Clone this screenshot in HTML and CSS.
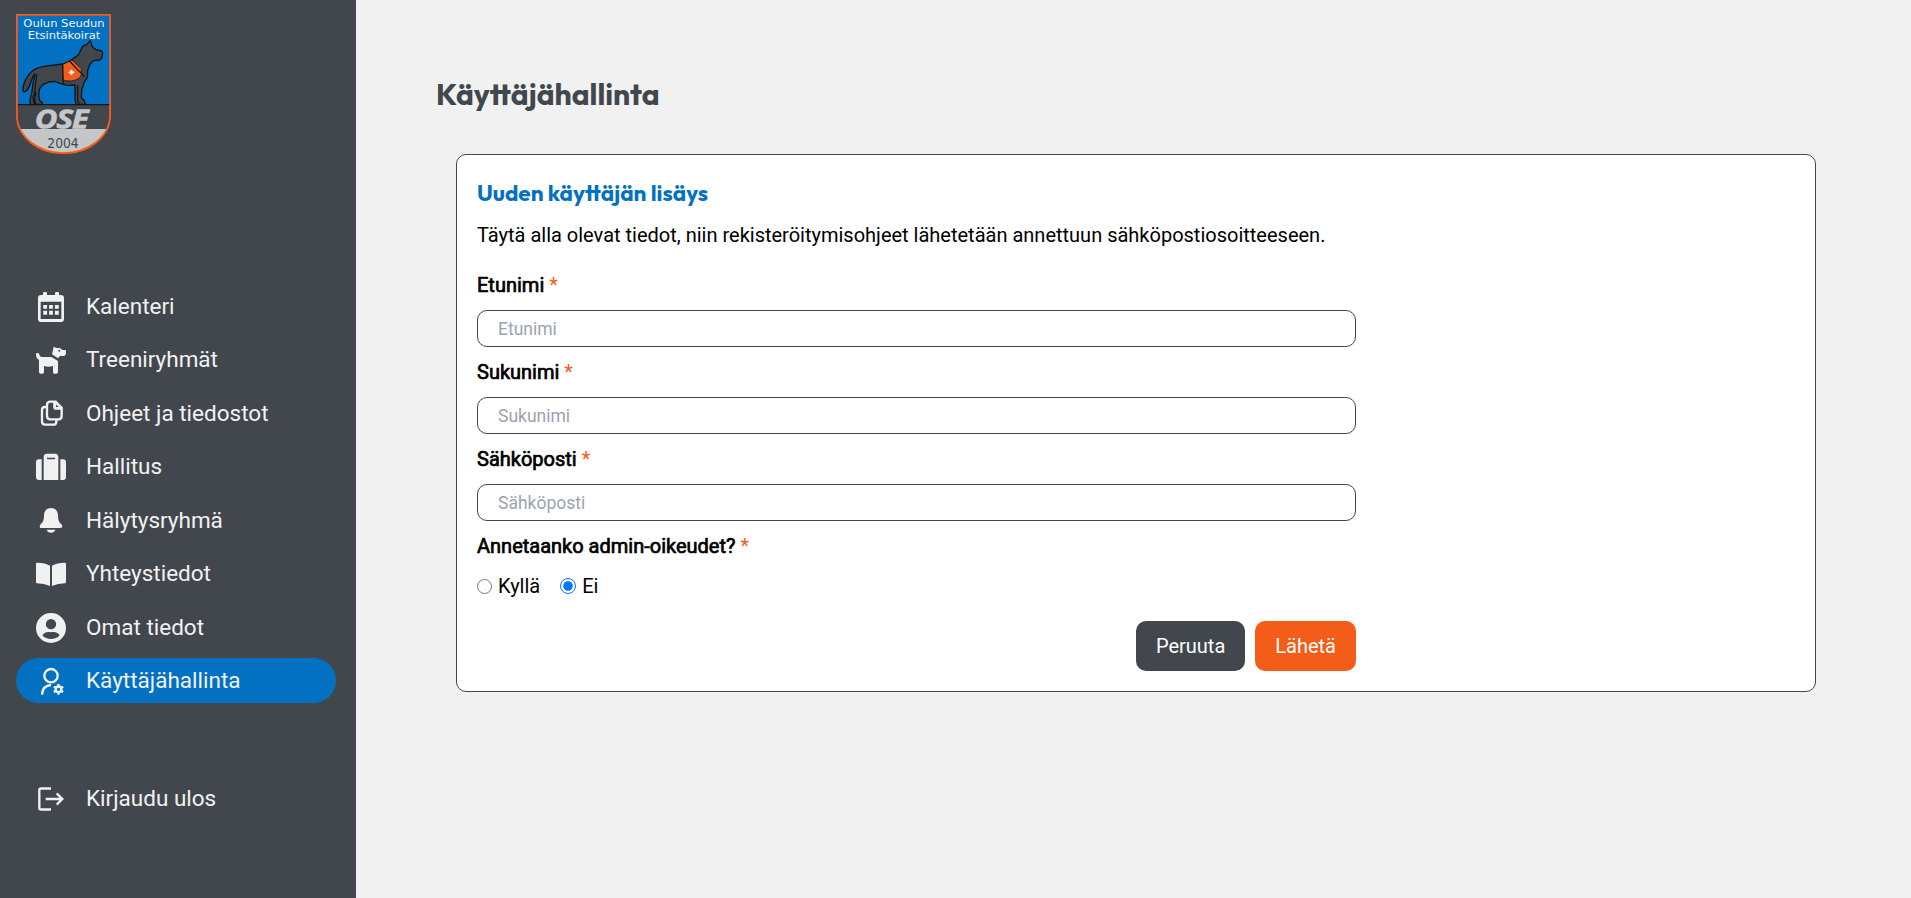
FILE: index.html
```html
<!DOCTYPE html>
<html lang="fi">
<head>
<meta charset="utf-8">
<title>Käyttäjähallinta</title>
<link rel="stylesheet" href="styles.css">
</head>
<body>
<div class="app">
  <aside class="sidebar">
    <svg class="logo" viewBox="48 42 285 420">
      <clipPath id="shield"><path d="M51 45H330V345C330 415 260 459 190 459C120 459 51 415 51 345Z"/></clipPath>
      <g clip-path="url(#shield)">
        <rect class="blue" x="48" y="42" width="285" height="272"/>
        <rect class="slate" x="48" y="313" width="285" height="75"/>
        <rect class="silver" x="48" y="387" width="285" height="80"/>
        <path class="ink" d="M48 314H333"/>
      </g>
      <path class="dog" d="M271 121L277 140L288 149L305 153L308 160L305 174L299 180L280 182L270 193L263 211L262 233L253 246L245 269L244 294L252 300L256 313H228L225 299V255L202 256L182 251L164 244L146 246L129 254L119 266L116 281L118 301L126 306V313H108L104 299L107 278L99 290L101 304L105 313H91L90 299L96 274L99 250L105 222C95 230 94 248 86 263C80 275 70 280 69 270C68 255 78 235 89 221C100 207 115 202 132 199L189 192L211 182L235 165L248 139L260 134Z"/>
      <path class="ink" d="M233 256V303L239 312M111 222C109 240 104 258 104 280"/>
      <path class="vest" d="M188 193L210 183L245 221C243 233 230 241 214 243L188 242Z"/>
      <path class="vest" d="M208 183L216 180L245 207L242 218Z"/>
      <path class="ink" d="M188 192L190 254M208 183L253 230"/>
      <path class="cross" d="M214.500 209V225M206.500 217H222.500"/>
      <text class="logo-name" x="192" y="80" textLength="244" lengthAdjust="spacingAndGlyphs">Oulun Seudun</text>
      <text class="logo-name" x="192" y="117" textLength="218" lengthAdjust="spacingAndGlyphs">Etsintäkoirat</text>
      <text class="logo-ose" x="185" y="385" textLength="158" lengthAdjust="spacingAndGlyphs">OSE</text>
      <text class="logo-year" x="189" y="444" textLength="94" lengthAdjust="spacingAndGlyphs">2004</text>
      <path class="rim" d="M50.500 44.500H330.500V345C330.500 415 260 459.500 190 459.500C120 459.500 50.500 415 50.500 345Z"/>
    </svg>
    <nav class="nav">
      <a class="item"><svg class="icon" viewBox="108 36 90 90"><path fill-rule="evenodd" d="M132 36H138Q141 36 141 40V45H165V40Q165 36 168 36H174Q177 36 177 40V45H182Q192 45 192 55V116Q192 126 182 126H124Q114 126 114 116V55Q114 45 124 45H129V40Q129 36 132 36ZM122 65V117H184V65Z"/><g class="dots"><path d="M135.500 75V86.500M153 75V86.500M170.500 75V86.500M135.500 92V104M153 92V104M170.500 92V104"/></g></svg>Kalenteri</a>
      <a class="item"><svg class="icon" viewBox="108 195 90 90"><path fill-rule="evenodd" d="M161 200L169 204L181 205L187 210H195Q198 210 198 213V218Q198 228 188 228H180L174 235L156 223ZM178 209A3 3 0 1 0 178 215A3 3 0 1 0 178 209ZM108 222C108 218 118 218 118 224Q119 231 127 231H154L174 243V276Q174 281 169 281H163Q159 281 159 276V258Q146 262 132 258V276Q132 281 127 281H122Q117 281 117 276V240Q108 235 108 222Z"/></svg>Treeniryhmät</a>
      <a class="item"><svg class="icon line7" viewBox="108 356 90 90"><path d="M151 364H167L185 382V407Q185 417 175 417H151Q141 417 141 407V374Q141 364 151 364ZM163 364V379Q163 385 169 385H185M141 380H135Q126 380 126 389V423Q126 433 136 433H159Q169 433 169 424V417"/><path class="solid" d="M163 364L185 385H169Q163 385 163 379Z"/><path class="hole" d="M168 373L176 380H168Z"/></svg>Ohjeet ja tiedostot</a>
      <a class="item"><svg class="icon" viewBox="108 516 90 90"><path fill-rule="evenodd" d="M125 538V600H117Q108 600 108 591V547Q108 538 117 538ZM181 538H189Q198 538 198 547V591Q198 600 189 600H181ZM131 600V531Q131 521 141 521H165Q175 521 175 531V600ZM141 533V538H165V533Z"/></svg>Hallitus</a>
      <a class="item"><svg class="icon" viewBox="108 46 90 90"><path d="M153 52C141 52 133 60 132 73C132 91 128 94 122 101C117 107 119 112 125 112H181C187 112 189 107 184 101C178 94 174 91 174 73C173 60 165 52 153 52ZM140 117H166C163 129 143 129 140 117Z"/></svg>Hälytysryhmä</a>
      <a class="item"><svg class="icon" viewBox="108 206 90 90"><path d="M150 226V287Q133 280 111 279Q108 279 108 276V220Q108 217 112 217Q135 217 150 226ZM156 226Q171 217 194 217Q198 217 198 220V276Q198 279 195 279Q173 280 156 287Z"/></svg>Yhteystiedot</a>
      <a class="item"><svg class="icon" viewBox="108 366 90 90"><path fill-rule="evenodd" d="M153 366A45 45 0 1 0 153 456A45 45 0 1 0 153 366ZM153 384A15.500 15.500 0 1 1 153 415A15.500 15.500 0 1 1 153 384ZM127 433C134 423 143 421 153 424C163 421 172 423 179 433C167 448 139 448 127 433Z"/></svg>Omat tiedot</a>
      <a class="item active"><svg class="icon line7" viewBox="108 526 90 90"><circle cx="153" cy="555" r="20"/><path d="M126 612C127 594 138 584 153 583"/><circle cx="175.500" cy="596" r="8.500"/><path class="teeth" d="M175.500 580V588M175.500 604V612M161.500 588L168.500 592M182.500 600L189.500 604M161.500 604L168.500 600M182.500 592L189.500 588"/></svg>Käyttäjähallinta</a>
    </nav>
    <a class="item logout"><svg class="icon line7" viewBox="108 72 90 90"><path d="M153 85.500H123Q118 85.500 118 90V144Q118 148.500 123 148.500H153M137 117H186M170 100L187 117L170 134"/></svg>Kirjaudu ulos</a>
  </aside>
  <main class="main">
    <h1 class="title">Käyttäjähallinta</h1>
    <section class="card">
      <h2 class="subtitle">Uuden käyttäjän lisäys</h2>
      <p class="intro">Täytä alla olevat tiedot, niin rekisteröitymisohjeet lähetetään annettuun sähköpostiosoitteeseen.</p>
      <form class="form">
        <label class="label" for="first"><b>Etunimi</b> <span class="req">*</span></label>
        <input class="input" id="first" placeholder="Etunimi">
        <label class="label" for="last"><b>Sukunimi</b> <span class="req">*</span></label>
        <input class="input" id="last" placeholder="Sukunimi">
        <label class="label" for="mail"><b>Sähköposti</b> <span class="req">*</span></label>
        <input class="input" id="mail" placeholder="Sähköposti">
        <div class="label"><b>Annetaanko admin-oikeudet?</b> <span class="req">*</span></div>
        <div class="radios">
          <label class="choice"><input class="radio" type="radio" name="admin">Kyllä</label>
          <label class="choice"><input class="radio" type="radio" name="admin" checked>Ei</label>
        </div>
        <div class="actions">
          <button class="button" type="button">Peruuta</button>
          <button class="button primary" type="button">Lähetä</button>
        </div>
      </form>
    </section>
  </main>
</div>
</body>
</html>
```
FILE: styles.css
```css
* { box-sizing: border-box; }
body { margin: 0; font: 20px/30px Roboto, sans-serif; color: #000; }
.app { display: flex; height: 898px; background: #f1f1f1; }
.sidebar { width: 356px; flex: none; padding: 14px 20px 0 16px; background: #42474e; display: flex; flex-direction: column; }
.logo { width: 95px; height: 140px; display: block; flex: none; }
.blue { fill: #0271c2; }
.slate { fill: #42474e; }
.silver { fill: #c5c6c7; }
.ink { fill: none; stroke: #111519; stroke-width: 3.5; }
.dog { fill: #42474e; stroke: #111519; stroke-width: 4; stroke-linejoin: round; }
.vest { fill: #f45c1a; stroke: #111519; stroke-width: 2.5; }
.cross { stroke: #fff; stroke-width: 5; }
.rim { fill: none; stroke: #f45c1a; stroke-width: 6; }
.logo text { text-anchor: middle; }
.logo-name { font: 29px "DejaVu Sans", sans-serif; fill: #f1f1f1; }
.logo-ose { font: italic 600 75px "Open Sans", sans-serif; fill: #c5c6c7; stroke: #c5c6c7; stroke-width: 5; }
.logo-year { font: 41px "DejaVu Sans", sans-serif; fill: #42474e; }
.nav { margin-top: 129.050px; display: flex; flex-direction: column; gap: 8.500px; }
.item { height: 45px; flex: none; padding-left: 20px; display: flex; align-items: center; gap: 20px; border-radius: 23px; color: #f1f1f1; font-size: 22.5px; }
.active { background: #0271c2; }
.logout { margin-top: 73.200px; }
.icon { width: 30px; height: 30px; margin-top: 2px; fill: #f1f1f1; flex: none; }
.dots { stroke: #f1f1f1; stroke-width: 11.500; }
.line7 { fill: none; stroke: #f1f1f1; stroke-width: 7; }
.solid { fill: #f1f1f1; stroke: none; }
.hole { fill: #42474e; stroke: none; }
.teeth { stroke-width: 7; }
.main { flex: 1; padding: 74px 75px 0 80px; }
.title, .subtitle { font-family: Outfit, Lato, sans-serif; margin: 0; }
.title { font-size: 30px; line-height: 40px; font-weight: 700; color: #42474e; }
.card { margin: 40px 20px 0; height: 538px; border: 1px solid #42474e; border-radius: 10px; background: #fff; padding: 20px; }
.subtitle { font-size: 22.5px; line-height: 36px; font-weight: 700; color: #0271c2; }
.intro { margin: 9px 0 0; line-height: 30px; }
.form { width: 879px; margin-top: 20px; display: flex; flex-direction: column; }
.label { height: 30px; }
.label b { font-weight: 400; -webkit-text-stroke: .7px #000; }
.req { color: #f45c1a; }
.input { height: 37px; margin: 10px 0; padding: 0 20px; border: 1px solid #42474e; border-radius: 10px; background: #fff; font: 17.5px Roboto, sans-serif; }
.input::placeholder { color: #9ca3af; }
.radios { display: flex; gap: 20px; margin-top: 10px; }
.choice { display: flex; align-items: center; gap: 6px; }
.radio { width: 15px; height: 15px; margin: 0; }
.choice + .choice .radio { width: 16px; height: 16px; }
.actions { display: flex; justify-content: flex-end; gap: 10px; margin-top: 20px; }
.button { height: 50px; padding: 0 20px; border: 0; border-radius: 10px; background: #42474e; color: #fff; font: 20px Roboto, sans-serif; }
.primary { background: #f45c1a; }
```
